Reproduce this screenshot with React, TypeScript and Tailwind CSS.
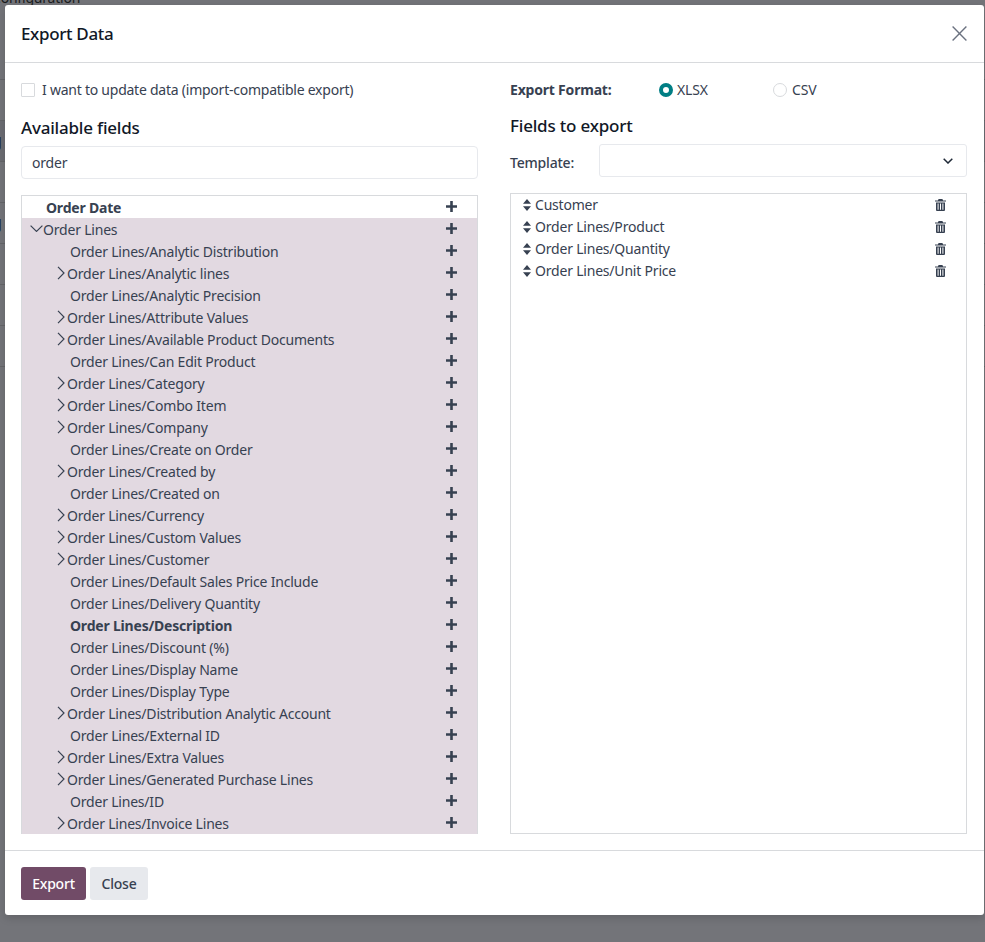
const fields = [
  { label: "Order Lines/Analytic Distribution" },
  { label: "Order Lines/Analytic lines", arrow: true },
  { label: "Order Lines/Analytic Precision" },
  { label: "Order Lines/Attribute Values", arrow: true },
  { label: "Order Lines/Available Product Documents", arrow: true },
  { label: "Order Lines/Can Edit Product" },
  { label: "Order Lines/Category", arrow: true },
  { label: "Order Lines/Combo Item", arrow: true },
  { label: "Order Lines/Company", arrow: true },
  { label: "Order Lines/Create on Order" },
  { label: "Order Lines/Created by", arrow: true },
  { label: "Order Lines/Created on" },
  { label: "Order Lines/Currency", arrow: true },
  { label: "Order Lines/Custom Values", arrow: true },
  { label: "Order Lines/Customer", arrow: true },
  { label: "Order Lines/Default Sales Price Include" },
  { label: "Order Lines/Delivery Quantity" },
  { label: "Order Lines/Description", bold: true },
  { label: "Order Lines/Discount (%)" },
  { label: "Order Lines/Display Name" },
  { label: "Order Lines/Display Type" },
  { label: "Order Lines/Distribution Analytic Account", arrow: true },
  { label: "Order Lines/External ID" },
  { label: "Order Lines/Extra Values", arrow: true },
  { label: "Order Lines/Generated Purchase Lines", arrow: true },
  { label: "Order Lines/ID" },
  { label: "Order Lines/Invoice Lines", arrow: true },
];

const exported = ["Customer", "Order Lines/Product", "Order Lines/Quantity", "Order Lines/Unit Price"];

// rows of the page behind the dialog, only their ends show at the window edges
const backdropRows = ["", "J", "", "J", "", "", "", ""];

function Plus() {
  return (
    <svg width="11" height="11" viewBox="0 0 11 11" className="mb-[1px] shrink-0 fill-[#374151]">
      <path d="M4.2 0h2.6v4.2H11v2.6H6.8V11H4.2V6.8H0V4.2h4.2z" />
    </svg>
  );
}

function Sort() {
  return (
    <svg width="8" height="12" viewBox="0 0 8 12" className="shrink-0 fill-[#374151]">
      <path d="M4 0l4 4.8H0zM4 12L0 7.2h8z" />
    </svg>
  );
}

function Trash() {
  return (
    <svg width="11" height="12" viewBox="0 0 11 12" className="shrink-0 fill-[#374151]">
      <path d="M3.6 0h3.8l.7 1.4H11v1.2H0V1.4h2.9zM1 3.4h9V11a1 1 0 0 1-1 1H2a1 1 0 0 1-1-1zm1.6 1v6.4h1V4.4zm2.4 0v6.4h1V4.4zm2.4 0v6.4h1V4.4z" />
    </svg>
  );
}

function ArrowRight() {
  return (
    <svg width="8" height="14" viewBox="0 0 8 14" fill="none" className="mr-[2px] shrink-0 stroke-[#374151]">
      <path d="M1 .8L7 7l-6 6.2" strokeWidth="1.2" />
    </svg>
  );
}

function ArrowDown() {
  return (
    <svg width="13" height="7" viewBox="0 0 13 7" fill="none" className="mb-[1px] shrink-0 stroke-[#374151]">
      <path d="M.6.6l5.9 5.8L12.4.6" strokeWidth="1.2" />
    </svg>
  );
}

function Row({ label, arrow, bold }: { label: string; arrow?: boolean; bold?: boolean }) {
  return (
    <div className="flex h-[22px] items-center pr-[20px]">
      {arrow ? (
        <div className="flex flex-1 items-center pl-[35px]">
          <ArrowRight />
          <span>{label}</span>
        </div>
      ) : (
        <span className={bold ? "flex-1 pl-[48px] font-bold" : "flex-1 pl-[48px]"}>{label}</span>
      )}
      <Plus />
    </div>
  );
}

export default function App() {
  return (
    <div className="relative h-[942px] w-[985px] overflow-hidden bg-[#737479] font-['Noto_Sans',sans-serif] text-[14px] tracking-[-0.2px] text-[#374151]">
      <div className="absolute left-[-8px] top-[-13px] text-[#1c1d20]">Configuration</div>
      <div className="flex flex-col pt-[79px]">
        {backdropRows.map((t, i) => (
          <div
            key={i}
            className={
              i === 1
                ? "flex h-[41px] items-center border-t border-[#646569] bg-[#6b6c72] pl-[1px] text-[#1c1d20]"
                : "flex h-[41px] items-center border-t border-[#646569] pl-[1px] text-[#1c1d20]"
            }
          >
            <span className="ml-[-3px]">{t}</span>
          </div>
        ))}
      </div>

      <div className="absolute left-[5px] top-[5px] flex h-[910px] w-[979px] flex-col rounded-[3px] bg-white shadow-[0_3px_8px_rgba(0,0,0,0.15)]">
        <div className="flex h-[58px] items-center justify-between border-b border-[#d8dadd] pl-[16px] pr-[17px]">
          <h4 className="text-[17px] font-medium tracking-[-0.35px] text-[#111827]">Export Data</h4>
          <svg width="15" height="15" viewBox="0 0 15 15" fill="none" className="stroke-[#6b7280]">
            <path d="M.6.6l13.8 13.8M14.4.6L.6 14.4" strokeWidth="1.4" />
          </svg>
        </div>

        <div className="flex min-h-0 flex-1 gap-[32px] p-[16px]">
          <div className="flex w-[457px] flex-col">
            <label className="flex h-[22px] items-center gap-[7px]">
              <span className="h-[14px] w-[14px] rounded-[1px] border border-[#d8dadd] bg-white" />
              <span className="mb-[2px] tracking-[-0.24px]">I want to update data (import-compatible export)</span>
            </label>
            <h5 className="mt-[16px] text-[17px] font-medium leading-[22px] text-[#111827]">Available fields</h5>
            <input
              readOnly
              value="order"
              className="mt-[7px] h-[33px] w-full rounded-[4px] border border-[#e7e9ed] px-[10px] outline-none"
            />
            <div className="mt-[16px] min-h-0 flex-1 overflow-hidden border border-b-0 border-[#d8dadd] bg-[#e2d9e1]">
              <div className="flex h-[22px] items-center bg-white pl-[24px] pr-[20px]">
                <span className="flex-1 font-bold">Order Date</span>
                <Plus />
              </div>
              <div className="flex h-[22px] items-center pr-[20px]">
                <span className="pl-[8px]">
                  <ArrowDown />
                </span>
                <span className="flex-1">Order Lines</span>
                <Plus />
              </div>
              {fields.map((f) => (
                <Row key={f.label} {...f} />
              ))}
            </div>
          </div>

          <div className="flex w-[457px] flex-col">
            <div className="flex h-[22px] items-center">
              <span className="mb-[2px] w-[149px] font-bold">Export Format:</span>
              <span className="h-[14px] w-[14px] rounded-full border-[4px] border-[#017e84] bg-white" />
              <span className="mb-[2px] ml-[4px] w-[96px]">XLSX</span>
              <span className="h-[14px] w-[14px] rounded-full border border-[#d8dadd] bg-white" />
              <span className="mb-[2px] ml-[5px]">CSV</span>
            </div>
            <h5 className="mt-[14px] text-[17px] font-medium leading-[22px] text-[#111827]">Fields to export</h5>
            <div className="mt-[7px] flex h-[33px] items-center">
              <span className="mt-[4px] w-[89px] font-medium">Template:</span>
              <div className="flex h-full flex-1 items-center justify-end rounded-[3px] border border-[#e7e9ed] pr-[13px]">
                <svg width="10" height="6" viewBox="0 0 10 6" fill="none" className="stroke-[#1f2937]">
                  <path d="M.7.7L5 5l4.3-4.3" strokeWidth="1.5" />
                </svg>
              </div>
            </div>
            <div className="mt-[16px] min-h-0 flex-1 border border-[#d8dadd] pl-[12px] pr-[20px]">
              {exported.map((name) => (
                <div key={name} className="flex h-[22px] items-center">
                  <Sort />
                  <span className="mb-[2px] ml-[4px] flex-1">{name}</span>
                  <Trash />
                </div>
              ))}
            </div>
          </div>
        </div>

        <div className="flex h-[65px] items-center gap-[4px] border-t border-[#d8dadd] px-[16px]">
          <button className="h-[33px] w-[65px] rounded-[3px] bg-[#714b67] font-medium text-white">Export</button>
          <button className="h-[33px] w-[58px] rounded-[3px] bg-[#e7e9ed] font-medium text-[#374151]">Close</button>
        </div>
      </div>
    </div>
  );
}
